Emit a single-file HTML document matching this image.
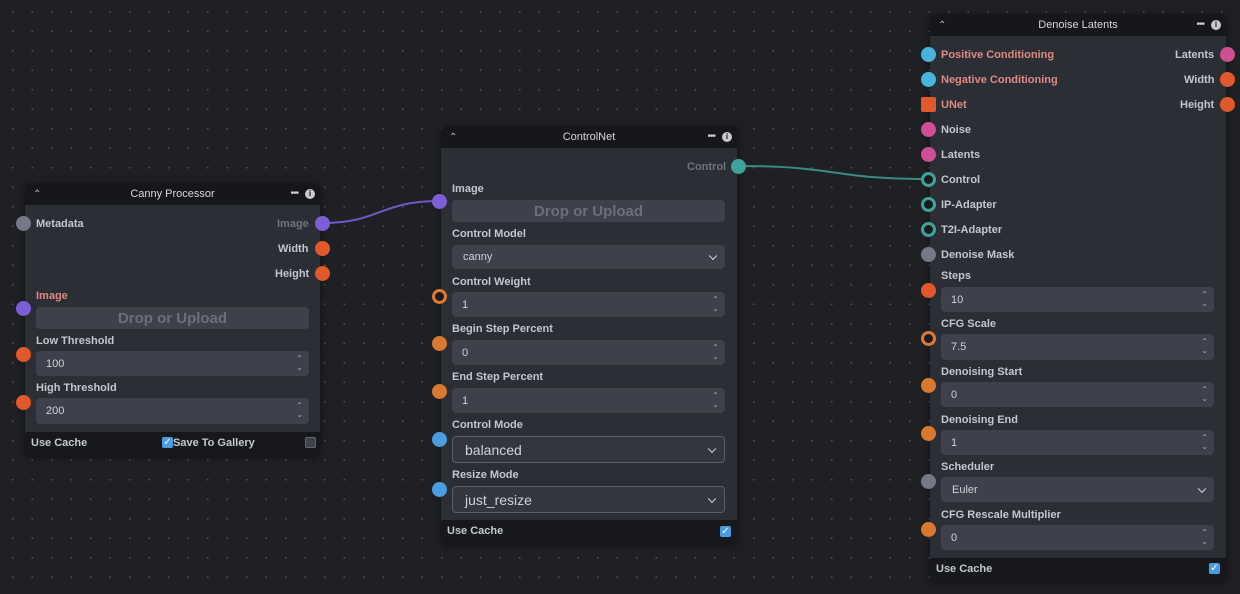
<!DOCTYPE html>
<html><head><meta charset="utf-8"><style>
*{box-sizing:border-box;margin:0;padding:0}
body{width:1240px;height:594px;overflow:hidden;background:#1f2024;background-image:radial-gradient(circle,#4a4c54 0.9px,transparent 1.1px);background-size:19.5px 19.5px;background-position:3px 2px;font-family:"Liberation Sans",sans-serif;position:relative}
.n{position:absolute;background:#2c2e35;border-radius:5px;box-shadow:0 2px 8px rgba(0,0,0,.5)}
.hd{position:absolute;left:0;top:0;right:0;height:22px;background:#16171b;border-radius:5px 5px 0 0;color:#d6d8de;font-size:11px;text-align:center;line-height:23px}
.hd .c{position:absolute;left:8px;top:0;font-size:10px;color:#bbb}
.hd .m{position:absolute;right:22px;top:-1px;font-size:10px;color:#ccc;letter-spacing:-1px}
.hd .i{position:absolute;right:5px;top:6px;width:10px;height:10px;border-radius:50%;background:#c8cad0;color:#16171b;font-size:8px;line-height:10px;font-weight:bold}
.ft{position:absolute;left:0;right:0;bottom:0;height:23px;background:#17181c;border-radius:0 0 5px 5px;color:#c5c8d0;font-size:11px;line-height:23px;padding-left:6px;font-weight:600}
.t{position:absolute;font-size:11px;color:#c3c6ce;font-weight:600;white-space:nowrap;line-height:14px;margin-top:1px}
.r{color:#dd8a82}
.dim{color:#6f737e}
.h{position:absolute;width:15px;height:15px;border-radius:50%;margin:-7.5px 0 0 -7.5px}
.ho{background:#1a1b1f;border:3px solid}
.box{position:absolute;background:#3e414b;border-radius:4px;color:#d0d2d8;font-size:11px}
.drop{color:#6a6f7c;font-size:15px;text-align:center;font-weight:600}
.sp{position:absolute;right:6px;top:3px;font-size:8px;line-height:9px;color:#aaa;text-align:center}
.sel{border:1px solid #5a5e6a;background:#34363e;font-size:14px}
.chev{position:absolute;right:9px;top:50%;width:6px;height:6px;border-right:1.5px solid #ddd;border-bottom:1.5px solid #ddd;transform:translateY(-70%) rotate(45deg)}
.cb{position:absolute;width:11px;height:11px;border-radius:2px;background:#4b9de0;color:#fff;font-size:10px;line-height:11px;text-align:center}
.cbu{position:absolute;width:11px;height:11px;border-radius:2px;background:#3e414b;border:1px solid #666}
</style></head><body>
<svg width="1240" height="594" style="position:absolute;left:0;top:0">
<path d="M322 223 C 380 223, 380 201, 439 201" stroke="#7157c4" stroke-width="2" fill="none"/>
<path d="M738 166 C 840 166, 830 179, 928 179" stroke="#3c8a82" stroke-width="2" fill="none"/>
</svg>

<!-- Canny -->
<div class="n" style="left:25px;top:183px;width:295px;height:272px">
<div class="hd"><span class="c">⌃</span>Canny Processor<span class="m">•••</span><span class="i">i</span></div>
<div class="ft">Use Cache</div>
</div>
<div class="t" style="left:36px;top:216px">Metadata</div>
<div class="t dim" style="left:277px;top:216px">Image</div>
<div class="t" style="left:278px;top:241px">Width</div>
<div class="t" style="left:275px;top:266px">Height</div>
<div class="t r" style="left:36px;top:288px">Image</div>
<div class="box drop" style="left:36px;top:307px;width:273px;height:22px;line-height:23px">Drop or Upload</div>
<div class="t" style="left:36px;top:333px">Low Threshold</div>
<div class="box" style="left:36px;top:351px;width:273px;height:25px;line-height:26px;padding-left:10px">100<div class="sp">⌃<br>⌄</div></div>
<div class="t" style="left:36px;top:380px">High Threshold</div>
<div class="box" style="left:36px;top:398px;width:273px;height:26px;line-height:27px;padding-left:10px">200<div class="sp">⌃<br>⌄</div></div>
<div class="cb" style="left:162px;top:437px">✓</div>
<div class="t" style="left:173px;top:435px">Save To Gallery</div>
<div class="cbu" style="left:305px;top:437px"></div>
<div class="h" style="left:23px;top:223px;background:#747985"></div>
<div class="h" style="left:322px;top:223px;background:#7c5fd6"></div>
<div class="h" style="left:322px;top:248px;background:#e1582a"></div>
<div class="h" style="left:322px;top:273px;background:#e1582a"></div>
<div class="h" style="left:23px;top:308px;background:#7c5fd6"></div>
<div class="h" style="left:23px;top:354px;background:#e1582a"></div>
<div class="h" style="left:23px;top:402px;background:#e1582a"></div>

<!-- ControlNet -->
<div class="n" style="left:441px;top:126px;width:296px;height:417px">
<div class="hd"><span class="c">⌃</span>ControlNet<span class="m">•••</span><span class="i">i</span></div>
<div class="ft">Use Cache</div>
</div>
<div class="t dim" style="left:687px;top:159px">Control</div>
<div class="t" style="left:452px;top:181px">Image</div>
<div class="box drop" style="left:452px;top:200px;width:273px;height:22px;line-height:23px">Drop or Upload</div>
<div class="t" style="left:452px;top:226px">Control Model</div>
<div class="box" style="left:452px;top:245px;width:273px;height:24px;line-height:25px;padding-left:11px">canny<div class="chev"></div></div>
<div class="t" style="left:452px;top:274px">Control Weight</div>
<div class="box" style="left:452px;top:292px;width:273px;height:25px;line-height:26px;padding-left:10px">1<div class="sp">⌃<br>⌄</div></div>
<div class="t" style="left:452px;top:321px">Begin Step Percent</div>
<div class="box" style="left:452px;top:340px;width:273px;height:25px;line-height:26px;padding-left:10px">0<div class="sp">⌃<br>⌄</div></div>
<div class="t" style="left:452px;top:369px">End Step Percent</div>
<div class="box" style="left:452px;top:388px;width:273px;height:25px;line-height:26px;padding-left:10px">1<div class="sp">⌃<br>⌄</div></div>
<div class="t" style="left:452px;top:417px">Control Mode</div>
<div class="box sel" style="left:452px;top:436px;width:273px;height:27px;line-height:26px;padding-left:12px">balanced<div class="chev"></div></div>
<div class="t" style="left:452px;top:467px">Resize Mode</div>
<div class="box sel" style="left:452px;top:486px;width:273px;height:27px;line-height:26px;padding-left:12px">just_resize<div class="chev"></div></div>
<div class="cb" style="left:720px;top:526px">✓</div>
<div class="h" style="left:738px;top:166px;background:#3fa39a"></div>
<div class="h" style="left:439px;top:201px;background:#7c5fd6"></div>
<div class="h ho" style="left:439px;top:296px;border-color:#e07a2e"></div>
<div class="h" style="left:439px;top:343px;background:#d9782f"></div>
<div class="h" style="left:439px;top:391px;background:#d9782f"></div>
<div class="h" style="left:439px;top:439px;background:#4a9ee0"></div>
<div class="h" style="left:439px;top:489px;background:#4a9ee0"></div>

<!-- Denoise -->
<div class="n" style="left:930px;top:14px;width:296px;height:567px">
<div class="hd"><span class="c">⌃</span>Denoise Latents<span class="m">•••</span><span class="i">i</span></div>
<div class="ft">Use Cache</div>
</div>
<div class="t r" style="left:941px;top:47px">Positive Conditioning</div>
<div class="t r" style="left:941px;top:72px">Negative Conditioning</div>
<div class="t r" style="left:941px;top:97px">UNet</div>
<div class="t" style="left:941px;top:122px">Noise</div>
<div class="t" style="left:941px;top:147px">Latents</div>
<div class="t" style="left:941px;top:172px">Control</div>
<div class="t" style="left:941px;top:197px">IP-Adapter</div>
<div class="t" style="left:941px;top:222px">T2I-Adapter</div>
<div class="t" style="left:941px;top:247px">Denoise Mask</div>
<div class="t" style="left:1175px;top:47px">Latents</div>
<div class="t" style="left:1184px;top:72px">Width</div>
<div class="t" style="left:1180px;top:97px">Height</div>
<div class="t" style="left:941px;top:268px">Steps</div>
<div class="box" style="left:941px;top:287px;width:273px;height:25px;line-height:26px;padding-left:10px">10<div class="sp">⌃<br>⌄</div></div>
<div class="t" style="left:941px;top:316px">CFG Scale</div>
<div class="box" style="left:941px;top:334px;width:273px;height:26px;line-height:27px;padding-left:10px">7.5<div class="sp">⌃<br>⌄</div></div>
<div class="t" style="left:941px;top:364px">Denoising Start</div>
<div class="box" style="left:941px;top:382px;width:273px;height:25px;line-height:26px;padding-left:10px">0<div class="sp">⌃<br>⌄</div></div>
<div class="t" style="left:941px;top:412px">Denoising End</div>
<div class="box" style="left:941px;top:430px;width:273px;height:25px;line-height:26px;padding-left:10px">1<div class="sp">⌃<br>⌄</div></div>
<div class="t" style="left:941px;top:459px">Scheduler</div>
<div class="box" style="left:941px;top:477px;width:273px;height:25px;line-height:26px;padding-left:11px">Euler<div class="chev"></div></div>
<div class="t" style="left:941px;top:507px">CFG Rescale Multiplier</div>
<div class="box" style="left:941px;top:525px;width:273px;height:25px;line-height:26px;padding-left:10px">0<div class="sp">⌃<br>⌄</div></div>
<div class="cb" style="left:1209px;top:563px">✓</div>
<div class="h" style="left:928px;top:54px;background:#47b4dd"></div>
<div class="h" style="left:928px;top:79px;background:#47b4dd"></div>
<div class="h" style="left:928px;top:104px;background:#e1582a;border-radius:2px"></div>
<div class="h" style="left:928px;top:129px;background:#d04e92"></div>
<div class="h" style="left:928px;top:154px;background:#d04e92"></div>
<div class="h ho" style="left:928px;top:179px;border-color:#3fa39a"></div>
<div class="h ho" style="left:928px;top:204px;border-color:#3fa39a"></div>
<div class="h ho" style="left:928px;top:229px;border-color:#3fa39a"></div>
<div class="h" style="left:928px;top:254px;background:#747985"></div>
<div class="h" style="left:1227px;top:54px;background:#d04e92"></div>
<div class="h" style="left:1227px;top:79px;background:#e1582a"></div>
<div class="h" style="left:1227px;top:104px;background:#e1582a"></div>
<div class="h" style="left:928px;top:290px;background:#e1582a"></div>
<div class="h ho" style="left:928px;top:338px;border-color:#e07a2e"></div>
<div class="h" style="left:928px;top:385px;background:#d9782f"></div>
<div class="h" style="left:928px;top:433px;background:#d9782f"></div>
<div class="h" style="left:928px;top:481px;background:#747985"></div>
<div class="h" style="left:928px;top:529px;background:#d9782f"></div>
</body></html>
